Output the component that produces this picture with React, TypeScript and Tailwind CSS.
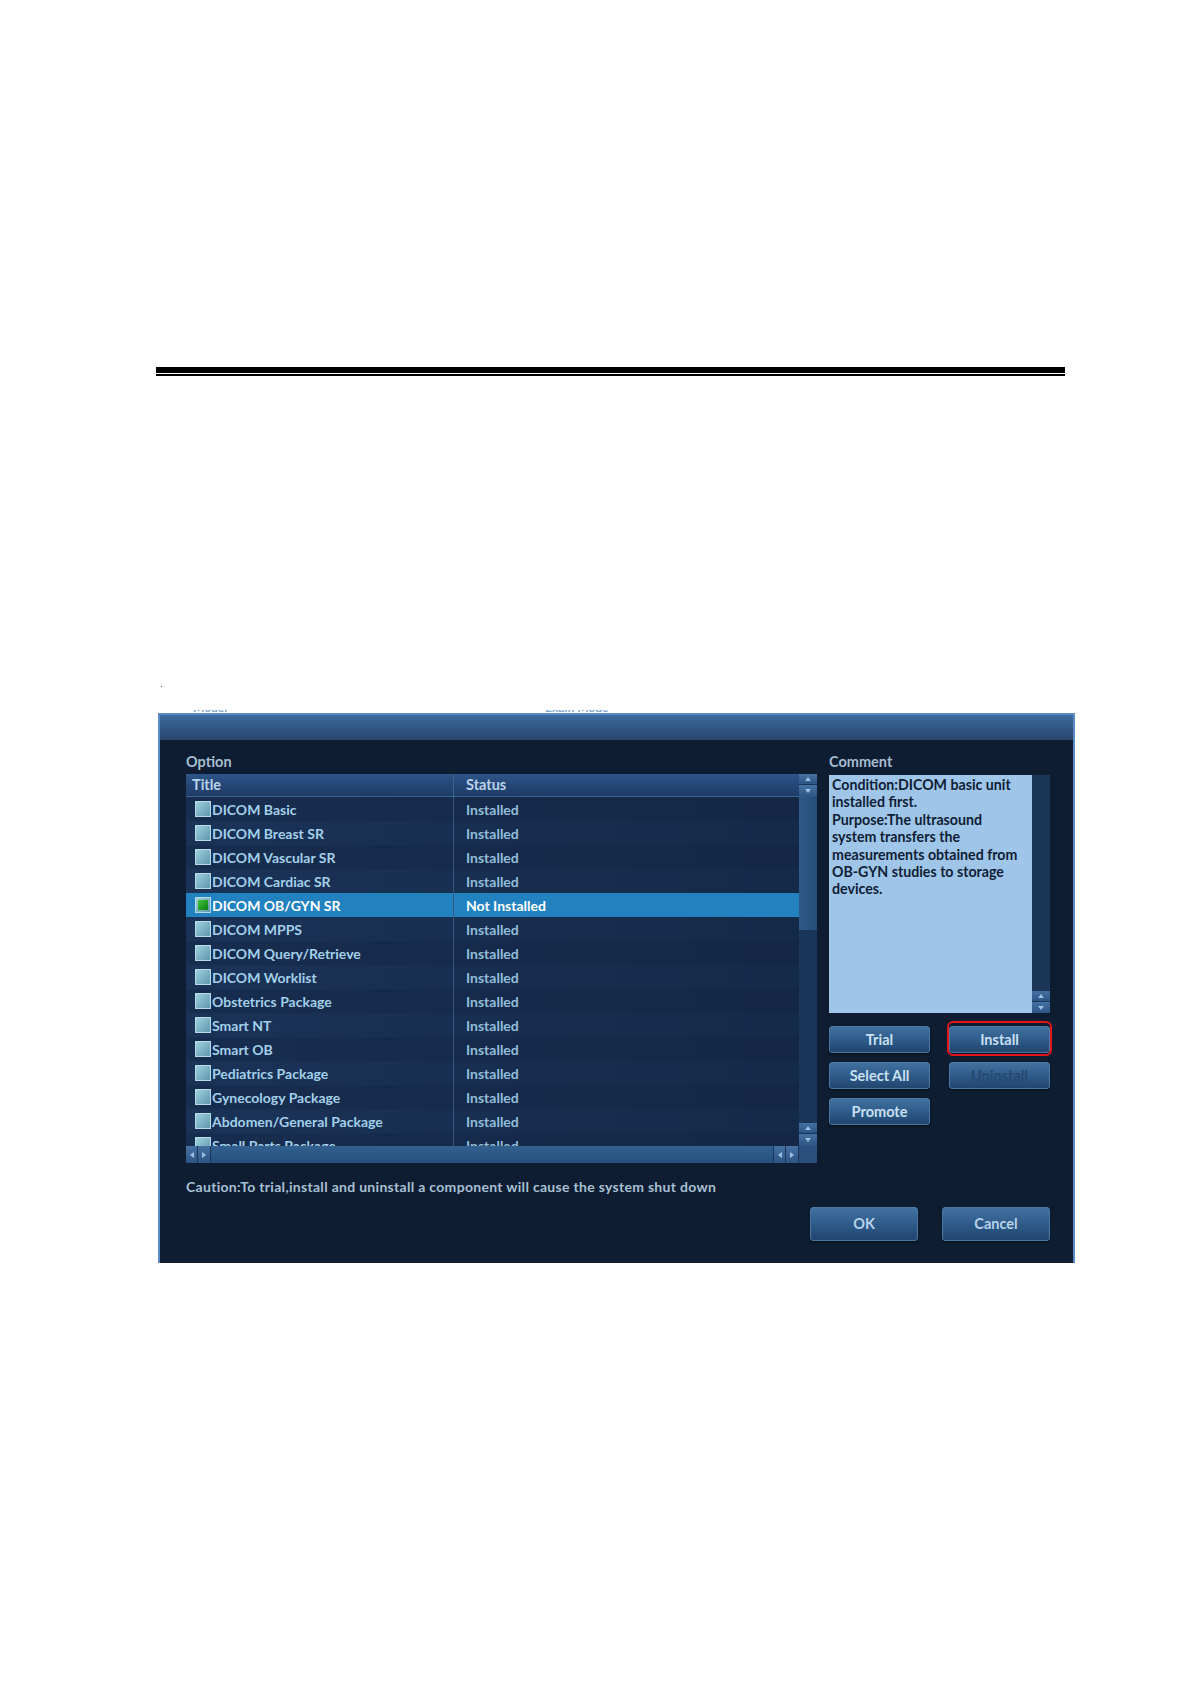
import React from 'react';

const FONT = { fontFamily: 'Lato, "Open Sans", sans-serif' };

const OPTIONS = [
  { title: 'DICOM Basic', status: 'Installed' },
  { title: 'DICOM Breast SR', status: 'Installed' },
  { title: 'DICOM Vascular SR', status: 'Installed' },
  { title: 'DICOM Cardiac SR', status: 'Installed' },
  { title: 'DICOM OB/GYN SR', status: 'Not Installed', selected: true },
  { title: 'DICOM MPPS', status: 'Installed' },
  { title: 'DICOM Query/Retrieve', status: 'Installed' },
  { title: 'DICOM Worklist', status: 'Installed' },
  { title: 'Obstetrics Package', status: 'Installed' },
  { title: 'Smart NT', status: 'Installed' },
  { title: 'Smart OB', status: 'Installed' },
  { title: 'Pediatrics Package', status: 'Installed' },
  { title: 'Gynecology Package', status: 'Installed' },
  { title: 'Abdomen/General Package', status: 'Installed' },
  { title: 'Small Parts Package', status: 'Installed' },
];

const COMMENT_LINES = [
  'Condition:DICOM basic unit',
  'installed first.',
  'Purpose:The ultrasound',
  'system transfers the',
  'measurements obtained from',
  'OB-GYN studies to storage',
  'devices.',
];

// small triangle glyph used in scroll arrows
function Arrow({ dir }: { dir: 'up' | 'down' | 'left' | 'right' }) {
  const pts = {
    up: '1,6 4,2 7,6',
    down: '1,2 4,6 7,2',
    left: '6,1 2,4 6,7',
    right: '2,1 6,4 2,7',
  }[dir];
  return (
    <svg width="8" height="8" viewBox="0 0 8 8">
      <polygon points={pts} fill="#9ec0e2" />
    </svg>
  );
}

function ArrowBox({ dir, className }: { dir: 'up' | 'down' | 'left' | 'right'; className: string }) {
  return (
    <div className={`flex items-center justify-center bg-gradient-to-b from-[#4571a3] to-[#2c5584] ${className}`}>
      <Arrow dir={dir} />
    </div>
  );
}

function CheckBox({ checked }: { checked?: boolean }) {
  return (
    <div className="w-[16px] h-[16px] shrink-0 border border-[#b6dbe8] bg-gradient-to-br from-[#9fd0de] to-[#5f98ac] flex items-center justify-center">
      {checked && <div className="w-[10px] h-[10px] bg-gradient-to-br from-[#3cc83c] to-[#0f7a12]" />}
    </div>
  );
}

function DlgButton({ label, disabled, className = '' }: { label: string; disabled?: boolean; className?: string }) {
  return (
    <div
      className={`flex items-center justify-center rounded-[3px] border border-[#4d78a6] bg-gradient-to-b from-[#42719f] via-[#2f5b8a] to-[#21466f] shadow-[0_1px_2px_rgba(0,0,0,0.6)] text-[14.5px] font-bold ${disabled ? 'text-[#24486f]' : 'text-[#c9e0f2]'} ${className}`}
    >
      {label}
    </div>
  );
}

function OptionTable() {
  return (
    <div className="w-[631px] flex flex-col">
      <div className="flex h-[372px]">
        <div className="w-[613px] flex flex-col overflow-hidden bg-gradient-to-r from-[#1b3459] to-[#122541]">
          {/* header */}
          <div className="h-[23px] shrink-0 flex bg-gradient-to-b from-[#2e5489] to-[#1d3b66] border-b border-[#3d6391] text-[14.5px] font-bold text-[#b9d4ea]">
            <div className="w-[268px] flex items-center pl-[6px] border-r border-[#3d6391]">Title</div>
            <div className="flex-1 flex items-center pl-[12px]">Status</div>
          </div>
          {OPTIONS.map((o, i) => (
            <div
              key={o.title}
              className={`h-[24px] shrink-0 flex text-[14px] font-bold ${
                o.selected ? 'bg-[#2281bf] text-white' : i % 2 === 0 ? 'bg-[#16294a]/60 text-[#a3d0ea]' : 'bg-[#1a3154]/40 text-[#a3d0ea]'
              }`}
            >
              <div className="w-[268px] flex items-center pl-[9px] gap-[1px] border-r border-[#34557d]">
                <CheckBox checked={o.selected} />
                <span>{o.title}</span>
              </div>
              <div className={`flex-1 flex items-center pl-[12px] ${o.selected ? 'text-white' : 'text-[#93bedb]'}`}>{o.status}</div>
            </div>
          ))}
        </div>
        {/* vertical scrollbar */}
        <div className="w-[18px] flex flex-col bg-[#1b3559]">
          <ArrowBox dir="up" className="h-[11px] border-b border-[#1b3559]" />
          <ArrowBox dir="down" className="h-[12px]" />
          <div className="h-[133px] bg-gradient-to-r from-[#2f5a89] to-[#264c78]" />
          <div className="flex-1" />
          <ArrowBox dir="up" className="h-[11px] border-b border-[#1b3559]" />
          <ArrowBox dir="down" className="h-[12px]" />
        </div>
      </div>
      {/* horizontal scrollbar */}
      <div className="flex h-[17px]">
        <div className="w-[613px] flex bg-gradient-to-b from-[#32608f] to-[#27507e]">
          <ArrowBox dir="left" className="w-[12px] border-r border-[#1b3559]" />
          <ArrowBox dir="right" className="w-[12px]" />
          <div className="flex-1 border-x border-[#1b3559]" />
          <ArrowBox dir="left" className="w-[12px] border-r border-[#1b3559]" />
          <ArrowBox dir="right" className="w-[12px]" />
          <div className="w-[1px] bg-[#1b3559]" />
        </div>
        <div className="w-[18px] bg-[#2a4f7c]" />
      </div>
    </div>
  );
}

function CommentPanel() {
  return (
    <div className="w-[221px] flex flex-col">
      <div className="h-[18px] flex items-center text-[14.5px] font-bold text-[#a6bdd1]">Comment</div>
      <div className="mt-[4px] flex h-[238px]">
        <div className="w-[203px] bg-[#9fc6e9] px-[3px] pt-[1px] text-[14.2px] font-bold leading-[17.4px] text-[#0f1d36] whitespace-nowrap overflow-hidden">
          {COMMENT_LINES.map((line) => (
            <div key={line}>{line}</div>
          ))}
        </div>
        <div className="w-[18px] flex flex-col bg-[#1c3658]">
          <div className="flex-1" />
          <ArrowBox dir="up" className="h-[11px] border-b border-[#1c3658]" />
          <ArrowBox dir="down" className="h-[11px]" />
        </div>
      </div>
      <div className="mt-[13px] grid grid-cols-[101px_101px] gap-x-[19px] gap-y-[9px]">
        <DlgButton label="Trial" className="h-[27px]" />
        <div className="relative">
          <DlgButton label="Install" className="h-[27px]" />
          <div className="absolute -inset-x-[2px] -top-[5px] -bottom-[3px] rounded-[6px] border-2 border-[#e3161b]" />
        </div>
        <DlgButton label="Select All" className="h-[27px]" />
        <DlgButton label="Uninstall" disabled className="h-[27px]" />
        <DlgButton label="Promote" className="h-[27px]" />
      </div>
    </div>
  );
}

export default function App() {
  return (
    <div className="w-[1191px] h-[1684px] bg-white overflow-hidden" style={FONT}>
      {/* heading rule */}
      <div className="pt-[367px] pl-[156px]">
        <div className="w-[909px] h-[6px] bg-black" />
        <div className="w-[909px] h-[2px] mt-[1px] bg-black" />
      </div>

      <div className="pl-[161px] mt-[310px] h-[2px]">
        <div className="w-[1px] h-[1px] bg-[#444]" />
      </div>

      {/* dialog */}
      <div className="ml-[158px] mt-[25px] w-[917px] h-[550px] relative flex flex-col bg-[#0e1d31] border-x-2 border-t-2 border-[#5b8bc6]">
        {/* clipped labels of the window behind */}
        <div className="absolute left-[33px] -top-[5px] h-[4px] w-[50px] overflow-hidden">
          <div className="text-[12px] font-bold text-[#7fa6cf] leading-[12px] -mt-[8px]">Model</div>
        </div>
        <div className="absolute left-[385px] -top-[5px] h-[4px] w-[78px] overflow-hidden">
          <div className="text-[12px] font-bold text-[#7fa6cf] leading-[12px] -mt-[8px]">Exam Mode</div>
        </div>

        <div className="h-[25px] shrink-0 bg-gradient-to-b from-[#3d6b9e] to-[#29466f]" />

        <div className="flex-1 pl-[26px] pr-[23px] pt-[13px] flex flex-col">
          <div className="flex gap-[12px]">
            <div className="flex flex-col">
              <div className="h-[18px] flex items-center text-[14.5px] font-bold text-[#a6bdd1]">Option</div>
              <div className="mt-[3px]">
                <OptionTable />
              </div>
            </div>
            <CommentPanel />
          </div>

          <div className="mt-[14px] h-[18px] flex items-center text-[14px] tracking-[0.3px] font-bold text-[#a7c0d4]">
            Caution:To trial,install and uninstall a component will cause the system shut down
          </div>

          <div className="mt-[12px] flex justify-end gap-[24px]">
            <DlgButton label="OK" className="w-[108px] h-[34px] !text-[#b7d3ea]" />
            <DlgButton label="Cancel" className="w-[108px] h-[34px] !text-[#b7d3ea]" />
          </div>
        </div>
      </div>
    </div>
  );
}
